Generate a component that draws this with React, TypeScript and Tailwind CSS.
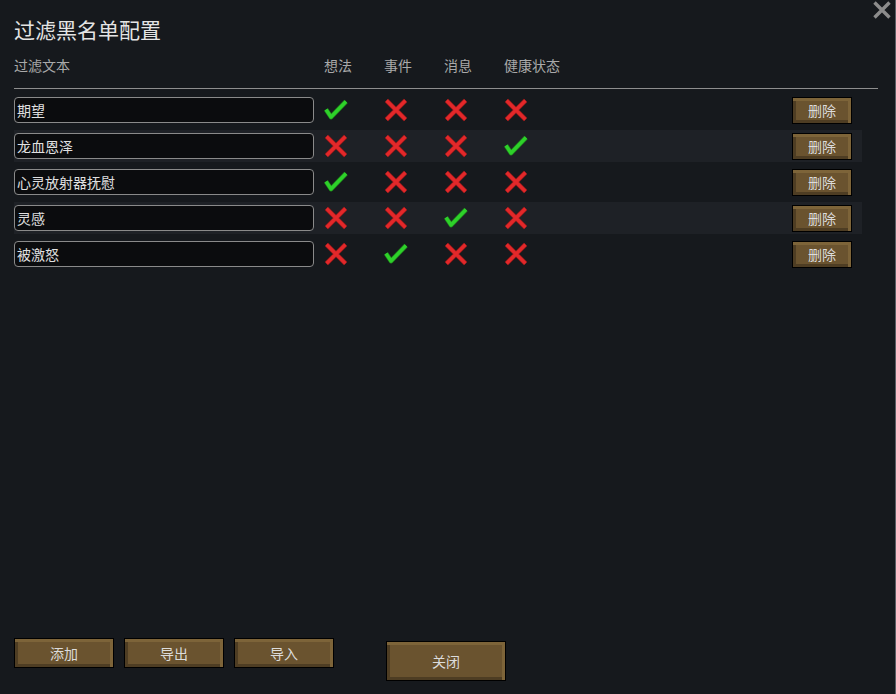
import React from "react";

type Row = { text: string; flags: boolean[] };

const rows: Row[] = [
  { text: "期望", flags: [true, false, false, false] },
  { text: "龙血恩泽", flags: [false, false, false, true] },
  { text: "心灵放射器抚慰", flags: [true, false, false, false] },
  { text: "灵感", flags: [false, false, true, false] },
  { text: "被激怒", flags: [false, true, false, false] },
];

const columns = ["想法", "事件", "消息", "健康状态"];

function Check() {
  return (
    <svg width="24" height="24" viewBox="0 0 24 24">
      <path
        d="M2 11.5 L7 19 L22 3.5"
        fill="none"
        stroke="#1f7f1c"
        strokeWidth="4.8"
        strokeLinejoin="round"
      />
      <path
        d="M2 11.5 L7 19 L22 3.5"
        fill="none"
        stroke="#2ed12a"
        strokeWidth="3.4"
        strokeLinejoin="round"
      />
    </svg>
  );
}

function Cross() {
  return (
    <svg width="24" height="24" viewBox="0 0 24 24">
      <path d="M2.5 2.5 L21.5 21.5 M21.5 2.5 L2.5 21.5" fill="none" stroke="#8a1a1a" strokeWidth="4.8" />
      <path d="M2.5 2.5 L21.5 21.5 M21.5 2.5 L2.5 21.5" fill="none" stroke="#e3282a" strokeWidth="3.4" />
    </svg>
  );
}

function WoodButton({ label, className }: { label: string; className: string }) {
  return (
    <button
      className={
        "flex items-center justify-center border border-black bg-[#6a532f] text-[14px] text-[#dcdcdc] shadow-[inset_-3px_3px_0_#7d6439,inset_3px_-3px_0_#4e3d23] " +
        className
      }
    >
      {label}
    </button>
  );
}

export default function App() {
  return (
    <div
      className="relative flex h-[694px] w-[896px] flex-col border-r border-[#5a5e64] bg-[#16191d] pl-[14px]"
      style={{ fontFamily: '"Noto Sans CJK SC", "Noto Sans", sans-serif' }}
    >
      <button className="absolute right-[4px] top-[1px] h-[18px] w-[18px]">
        <svg width="18" height="18" viewBox="0 0 18 18">
          <path d="M1.5 1.5 L16.5 16.5 M16.5 1.5 L1.5 16.5" stroke="#8c8c8c" strokeWidth="3.4" />
        </svg>
      </button>

      <h1 className="mt-[15px] text-[21px] leading-[28px] text-[#e4e4e4]">过滤黑名单配置</h1>

      <div className="mt-[12px] flex text-[14px] leading-[20px] text-[#a9a9a9]">
        <div className="w-[310px]">过滤文本</div>
        {columns.map((c) => (
          <div key={c} className="w-[60px]">
            {c}
          </div>
        ))}
      </div>

      <div className="mt-[13px] h-px w-[864px] bg-[#8e8e8e]" />

      <div className="mt-[5px] flex w-[848px] flex-col gap-[4px]">
        {rows.map((r, i) => (
          <div
            key={r.text}
            className={"flex h-[32px] items-center " + (i % 2 === 1 ? "bg-[#1e2126]" : "")}
          >
            <div className="flex h-[26px] w-[300px] items-center rounded-[4px] border border-[#8a8a8a] bg-[#0b0c0e] pl-[2px] text-[14px] text-[#e0e0e0]">
              {r.text}
            </div>
            <div className="ml-[10px] flex">
              {r.flags.map((f, j) => (
                <div key={j} className="w-[60px]">
                  {f ? <Check /> : <Cross />}
                </div>
              ))}
            </div>
            <div className="flex-1" />
            <WoodButton label="删除" className="mr-[10px] h-[27px] w-[60px]" />
          </div>
        ))}
      </div>

      <div className="flex-1" />

      <div className="mb-[13px] flex items-start">
        <div className="flex gap-[10px]">
          <WoodButton label="添加" className="h-[30px] w-[100px]" />
          <WoodButton label="导出" className="h-[30px] w-[100px]" />
          <WoodButton label="导入" className="h-[30px] w-[100px]" />
        </div>
        <WoodButton label="关闭" className="ml-[52px] mt-[3px] h-[40px] w-[120px]" />
      </div>
    </div>
  );
}
